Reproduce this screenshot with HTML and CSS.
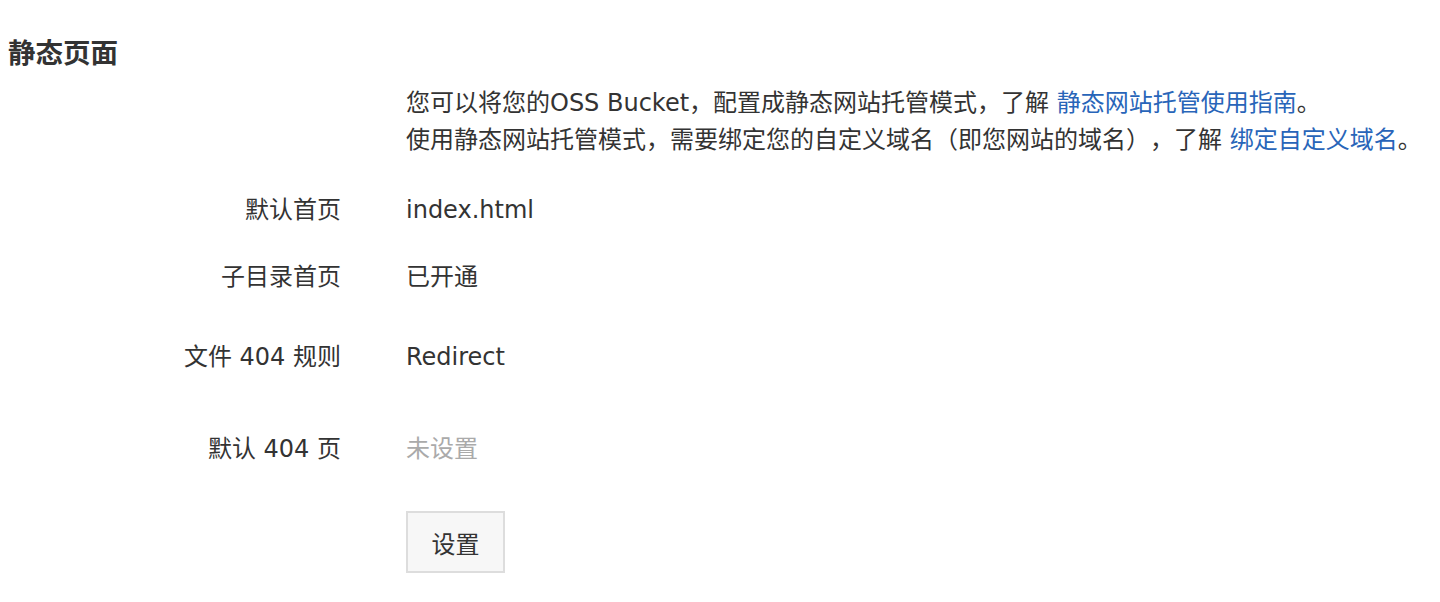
FILE: index.html
```html
<!DOCTYPE html>
<html lang="zh-CN">
<head>
    <meta charset="UTF-8">
    <meta name="viewport" content="width=device-width, initial-scale=1.0">
    <title>静态页面</title>
    <link rel="stylesheet" href="styles.css">
</head>
<body>
    <div class="page">
        <h2 class="section-title">静态页面</h2>

        <div class="form-row intro">
            <div class="form-label"></div>
            <div class="form-value">
                <p>您可以将您的OSS Bucket，配置成静态网站托管模式，了解 <a href="#">静态网站托管使用指南</a>。</p>
                <p>使用静态网站托管模式，需要绑定您的自定义域名（即您网站的域名），了解 <a href="#">绑定自定义域名</a>。</p>
            </div>
        </div>

        <div class="form-row row-index">
            <div class="form-label">默认首页</div>
            <div class="form-value">index.html</div>
        </div>

        <div class="form-row row-subdir">
            <div class="form-label">子目录首页</div>
            <div class="form-value">已开通</div>
        </div>

        <div class="form-row row-rule">
            <div class="form-label">文件 404 规则</div>
            <div class="form-value">Redirect</div>
        </div>

        <div class="form-row row-404">
            <div class="form-label">默认 404 页</div>
            <div class="form-value muted">未设置</div>
        </div>

        <div class="form-row row-actions">
            <div class="form-label"></div>
            <div class="form-value">
                <button class="btn">设置</button>
            </div>
        </div>
    </div>
</body>
</html>
```

FILE: styles.css
```css
body {
    margin: 0;
    font-family: "DejaVu Sans", "Noto Sans CJK SC", sans-serif;
    color: #333;
    background: #fff;
    text-spacing-trim: space-all;
}
.page {
    padding: 0 8px;
}
.section-title {
    margin: 35px 0 0;
    font-family: "Noto Sans CJK SC", sans-serif;
    font-size: 27.5px;
    line-height: 32px;
    font-weight: bold;
    color: #333;
}
.form-row {
    display: grid;
    grid-template-columns: 333px 1fr;
    column-gap: 65px;
    font-size: 24px;
    line-height: 30px;
}
.form-label {
    text-align: right;
}
.form-value p {
    margin: 0;
    line-height: 37px;
}
.form-value a {
    color: #2865b9;
    text-decoration: none;
}
.muted {
    color: #aaa;
}
.intro {
    margin-top: 18px;
}
.row-index {
    margin-top: 36px;
}
.row-subdir {
    margin-top: 37px;
}
.row-rule {
    margin-top: 50px;
}
.row-404 {
    margin-top: 62px;
}
.row-actions {
    margin-top: 47px;
}
.btn {
    width: 99px;
    height: 62px;
    background-color: #f7f7f7;
    border: 2px solid #ddd;
    font-family: inherit;
    font-size: 24px;
    color: #333;
    cursor: pointer;
}
.btn:hover {
    background-color: #eee;
}
```
